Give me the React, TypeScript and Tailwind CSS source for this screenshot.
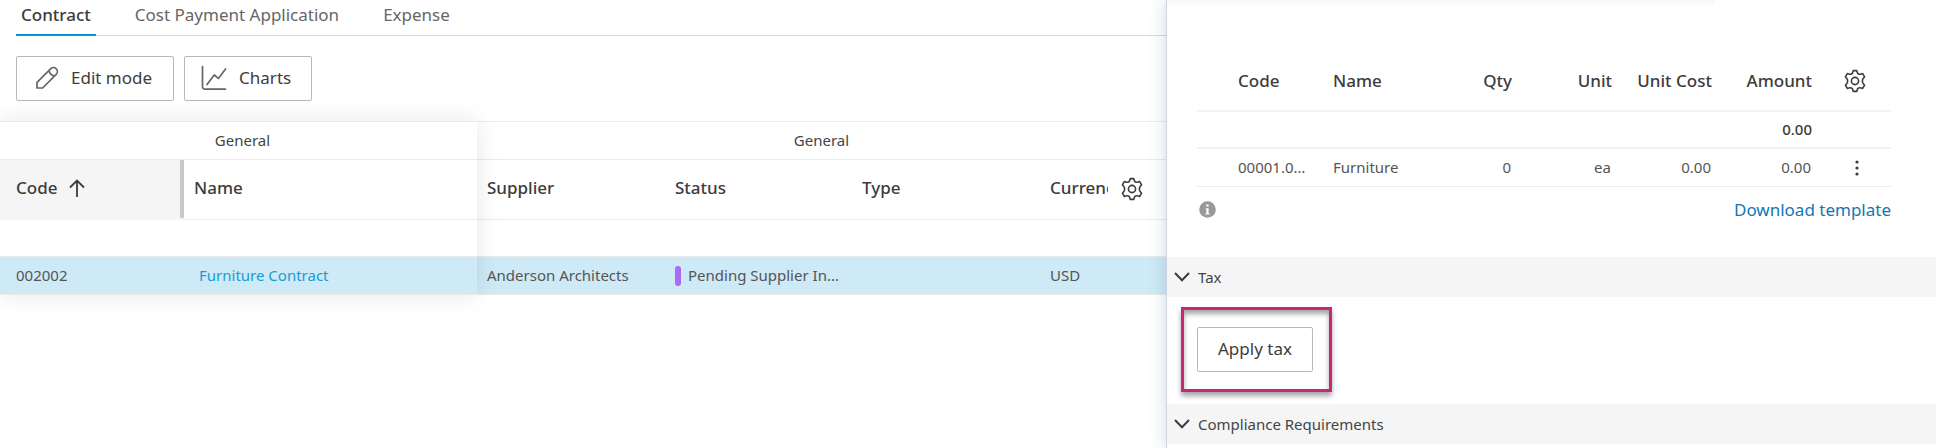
import type { ReactNode } from "react";
import { clsx } from "clsx";

interface Contract {
    code: string;
    name: string;
    supplier: string;
    status: string;
    type: string;
    currency: string;
}

interface CostItem {
    code: string;
    name: string;
    qty: number;
    unit: string;
    unitCost: string;
    amount: string;
}

const tabs = ["Contract", "Cost Payment Application", "Expense"];

const contracts: Contract[] = [
    {
        code: "002002",
        name: "Furniture Contract",
        supplier: "Anderson Architects",
        status: "Pending Supplier Input",
        type: "",
        currency: "USD",
    },
];

const costItems: CostItem[] = [
    { code: "00001.001", name: "Furniture", qty: 0, unit: "ea", unitCost: "0.00", amount: "0.00" },
];

const GearIcon = () => (
    <svg width="24" height="24" viewBox="0 0 24 24" fill="none" stroke="#3c3c3c" strokeWidth="1.6" strokeLinejoin="round">
        <path d="M10.3 1.6h3.4l.8 2.3q.3.8 1.1 1.1.9.5 1.8.2l2.3-.6 1.9 3.2-1.6 1.9q-.6.8-.6 2.3t.6 2.3l1.6 1.9-1.9 3.2-2.3-.6q-.9-.3-1.8.2-.8.3-1.1 1.1l-.8 2.3h-3.4l-.8-2.3q-.3-.8-1.1-1.1-.9-.5-1.8-.2l-2.3.6-1.9-3.2 1.6-1.9q.6-.8.6-2.3t-.6-2.3l-1.6-1.9 1.9-3.2 2.3.6q.9.3 1.8-.2.8-.3 1.1-1.1z" />
        <circle cx="12" cy="12" r="3.6" />
    </svg>
);

const PencilIcon = () => (
    <svg width="24" height="24" viewBox="0 0 24 24" fill="none" stroke="#666" strokeWidth="1.7" strokeLinejoin="round">
        <path d="M2 22v-5.6L15.6 2.8a3.9 3.9 0 0 1 5.6 5.6L7.6 22z" />
        <path d="M14 4.4q.6 4.8 5.6 5.6" />
    </svg>
);

const ChartIcon = () => (
    <svg width="26" height="26" viewBox="0 0 26 26" fill="none" stroke="#666" strokeWidth="1.7" strokeLinecap="round" strokeLinejoin="round">
        <path d="M1.5 1.5v20.3a2.4 2.4 0 0 0 2.4 2.4h20.6" />
        <path d="M6 19.5l7.2-9.5 4.2 3.4 7.1-9.4" />
    </svg>
);

const SortIcon = () => (
    <svg width="16" height="18" viewBox="0 0 16 18" fill="none" stroke="#3c3c3c" strokeWidth="1.8">
        <path d="M8 18V1.5M1 8.5l7-7 7 7" />
    </svg>
);

const ChevronIcon = () => (
    <svg width="16" height="10" viewBox="0 0 16 10" fill="none" stroke="#3c3c3c" strokeWidth="2">
        <path d="M1 1l7 7.2L15 1" />
    </svg>
);

const ToolButton = ({ children, className }: { children: ReactNode; className?: string }) => (
    <button
        type="button"
        className={clsx("flex h-[45px] items-center rounded-xs border border-[#b8b8b8] bg-white pb-0.5 text-[17px] text-[#3c3c3c]", className)}
    >
        {children}
    </button>
);

const SectionBar = ({ title }: { title: string }) => (
    <button type="button" aria-expanded="true" className="flex h-10 w-full items-center gap-2 bg-[#f5f5f5] pl-[7px] text-[15px] text-[#444]">
        <ChevronIcon />
        {title}
    </button>
);

const FrozenTable = () => (
    <table className="relative z-10 w-[477px] shrink-0 table-fixed border-separate border-spacing-0 bg-white text-left text-[15px] text-[#555] shadow-[0_0_22px_rgba(0,0,0,0.1)]">
        <colgroup>
            <col className="w-[184px]" />
            <col />
        </colgroup>
        <thead>
            <tr className="h-[39px]">
                <th colSpan={2} className="border-y border-[#eaeaea] pl-2 text-center font-normal text-[#444]">General</th>
            </tr>
            <tr className="h-[60px] text-[17px] text-[#3c3c3c]">
                <th className="relative bg-[#f5f5f5] pb-1 pl-4 font-medium">
                    <div className="flex items-center gap-3">
                        Code
                        <SortIcon />
                    </div>
                    <span className="absolute top-0 right-0 h-[58px] w-1 bg-[#c8c8c8]" />
                </th>
                <th className="border-b border-[#eaeaea] pb-1 pl-2.5 font-medium">Name</th>
            </tr>
        </thead>
        <tbody>
            <tr className="h-[37px]">
                <td colSpan={2} className="border-b border-[#eaeaea]" />
            </tr>
            {contracts.map((contract) => (
                <tr key={contract.code} className="h-[38px] bg-[#cdeaf6]">
                    <td className="border-b border-[#eaeaea] pl-4">{contract.code}</td>
                    <td className="border-b border-[#eaeaea] pl-[15px]">
                        <a href="#" className="text-[#1a9bd7]">{contract.name}</a>
                    </td>
                </tr>
            ))}
        </tbody>
    </table>
);

const DetailTable = () => (
    <div className="min-w-0 flex-1">
        <table className="w-full table-fixed border-separate border-spacing-0 bg-white text-left text-[15px] text-[#555]">
            <colgroup>
                <col className="w-[188px]" />
                <col className="w-[187px]" />
                <col className="w-[188px]" />
                <col />
            </colgroup>
            <thead>
                <tr className="h-[39px]">
                    <th colSpan={4} className="border-y border-[#eaeaea] text-center font-normal text-[#444]">General</th>
                </tr>
                <tr className="h-[60px] text-[17px] text-[#3c3c3c]">
                    <th className="border-b border-[#eaeaea] pb-1 pl-2.5 font-medium">Supplier</th>
                    <th className="border-b border-[#eaeaea] pb-1 pl-2.5 font-medium">Status</th>
                    <th className="border-b border-[#eaeaea] pb-1 pl-2.5 font-medium">Type</th>
                    <th className="border-b border-[#eaeaea] pr-[22px] pb-0.5 pl-2.5 font-medium">
                        <div className="flex items-center gap-3">
                            <span className="mb-0.5 min-w-0 flex-1 overflow-hidden whitespace-nowrap">Currency</span>
                            <button type="button" aria-label="Column settings" className="shrink-0">
                                <GearIcon />
                            </button>
                        </div>
                    </th>
                </tr>
            </thead>
            <tbody>
                <tr className="h-[37px]">
                    <td colSpan={4} className="border-b border-[#eaeaea]" />
                </tr>
                {contracts.map((contract) => (
                    <tr key={contract.code} className="h-[38px] bg-[#cdeaf6]">
                        <td className="border-b border-[#eaeaea] pl-2.5">{contract.supplier}</td>
                        <td className="border-b border-[#eaeaea] px-2.5">
                            <div className="flex items-center gap-[7px]">
                                <span className="h-5 w-1.5 shrink-0 rounded-sm bg-[#a96df5]" />
                                <span className="truncate">{contract.status}</span>
                            </div>
                        </td>
                        <td className="border-b border-[#eaeaea] pl-2.5">{contract.type}</td>
                        <td className="border-b border-[#eaeaea] pl-2.5">{contract.currency}</td>
                    </tr>
                ))}
            </tbody>
        </table>
    </div>
);

const CostItemsTable = () => (
    <table className="w-full table-fixed border-separate border-spacing-0 text-right text-[15px] text-[#555]">
        <thead>
            <tr className="h-[60px] text-[17px] whitespace-nowrap text-[#3c3c3c]">
                <th className="w-[126px] border-b-2 border-[#f2f2f2] pl-[41px] text-left font-medium">Code</th>
                <th className="border-b-2 border-[#f2f2f2] pl-2.5 text-left font-medium">Name</th>
                <th className="w-[100px] border-b-2 border-[#f2f2f2] pr-2.5 font-medium">Qty</th>
                <th className="w-[100px] border-b-2 border-[#f2f2f2] pr-2.5 font-medium">Unit</th>
                <th className="w-[100px] border-b-2 border-[#f2f2f2] pr-2.5 font-medium">Unit Cost</th>
                <th className="w-[100px] border-b-2 border-[#f2f2f2] pr-2.5 font-medium">Amount</th>
                <th className="w-[69px] border-b-2 border-[#f2f2f2] pl-[21px] text-left">
                    <button type="button" aria-label="Table settings" className="block">
                        <GearIcon />
                    </button>
                </th>
            </tr>
        </thead>
        <tbody>
            <tr className="h-[37px]">
                <td colSpan={5} className="border-b-2 border-[#f2f2f2]" />
                <td className="border-b-2 border-[#f2f2f2] pr-2.5 font-medium text-[#3c3c3c]">0.00</td>
                <td className="border-b-2 border-[#f2f2f2]" />
            </tr>
            {costItems.map((item) => (
                <tr key={item.code} className="h-[38px]">
                    <td className="border-b border-[#eaeaea] pr-4 pl-[41px] text-left">
                        <div className="truncate">{item.code}</div>
                    </td>
                    <td className="border-b border-[#eaeaea] pl-2.5 text-left">{item.name}</td>
                    <td className="border-b border-[#eaeaea] pr-[11px]">{item.qty}</td>
                    <td className="border-b border-[#eaeaea] pr-[11px]">{item.unit}</td>
                    <td className="border-b border-[#eaeaea] pr-[11px]">{item.unitCost}</td>
                    <td className="border-b border-[#eaeaea] pr-[11px]">{item.amount}</td>
                    <td className="border-b border-[#eaeaea] pl-[31px] text-left">
                        <button type="button" aria-label="More actions" className="block">
                            <svg width="8" height="16" viewBox="0 0 8 16" fill="#3c3c3c">
                                <circle cx="4" cy="2" r="1.6" />
                                <circle cx="4" cy="8" r="1.6" />
                                <circle cx="4" cy="14" r="1.6" />
                            </svg>
                        </button>
                    </td>
                </tr>
            ))}
        </tbody>
    </table>
);

const App = () => {
    return (
        <div className="flex min-h-screen overflow-hidden bg-white font-['Noto_Sans',sans-serif]">
            <main className="min-w-0 flex-1">
                <nav className="ml-4 flex gap-[34px] border-b border-[#d9d9d9] text-[17px]">
                    {tabs.map((tab, index) => (
                        <a
                            key={tab}
                            href="#"
                            className={clsx(
                                "-mb-px h-9 border-b-2 px-[5px] leading-[30px]",
                                index === 0 ? "border-[#0696d7] font-medium text-[#3c3c3c]" : "border-transparent text-[#666]"
                            )}
                        >
                            {tab}
                        </a>
                    ))}
                </nav>

                <div className="flex gap-2.5 py-5 pl-4">
                    <ToolButton className="gap-3 pr-[21px] pl-[18px]">
                        <PencilIcon />
                        Edit mode
                    </ToolButton>
                    <ToolButton className="gap-3 pr-5 pl-4">
                        <ChartIcon />
                        Charts
                    </ToolButton>
                </div>

                <div className="flex">
                    <FrozenTable />
                    <DetailTable />
                </div>
            </main>

            <aside className="relative z-20 w-[770px] shrink-0 border-l border-[#cdd3e2] bg-white shadow-[0_0_16px_rgba(60,80,120,0.22)]">
                <div className="h-2 w-[548px] bg-linear-to-b from-[#f8f8f8] to-white" />
                <div className="pt-11 pr-[45px] pl-[30px]">
                    <CostItemsTable />
                    <div className="flex h-[70px] items-start justify-between pt-2.5 pl-0.5">
                        <svg width="17" height="17" viewBox="0 0 17 17" className="mt-1" role="img" aria-label="Info">
                            <circle cx="8.5" cy="8.5" r="8.3" fill="#999" />
                            <path d="M7.2 3.6h2.4v2H7.2zM6.6 7.2h3v5.4h1v1H6.4v-1h1V8.2h-.8z" fill="#fff" />
                        </svg>
                        <a href="#" className="text-[17px] leading-[26px] text-[#0f78b4]">Download template</a>
                    </div>
                </div>

                <SectionBar title="Tax" />
                <div className="pt-2.5 pb-3 pl-3.5">
                    <div className="w-fit border-[3px] border-[#c9267a] py-[17px] pr-4 pl-[13px] shadow-[0_4px_5px_rgba(0,0,0,0.35),inset_0_4px_5px_rgba(0,0,0,0.35)]">
                        <ToolButton className="px-5">Apply tax</ToolButton>
                    </div>
                </div>
                <SectionBar title="Compliance Requirements" />
            </aside>
        </div>
    );
};

export default App;
